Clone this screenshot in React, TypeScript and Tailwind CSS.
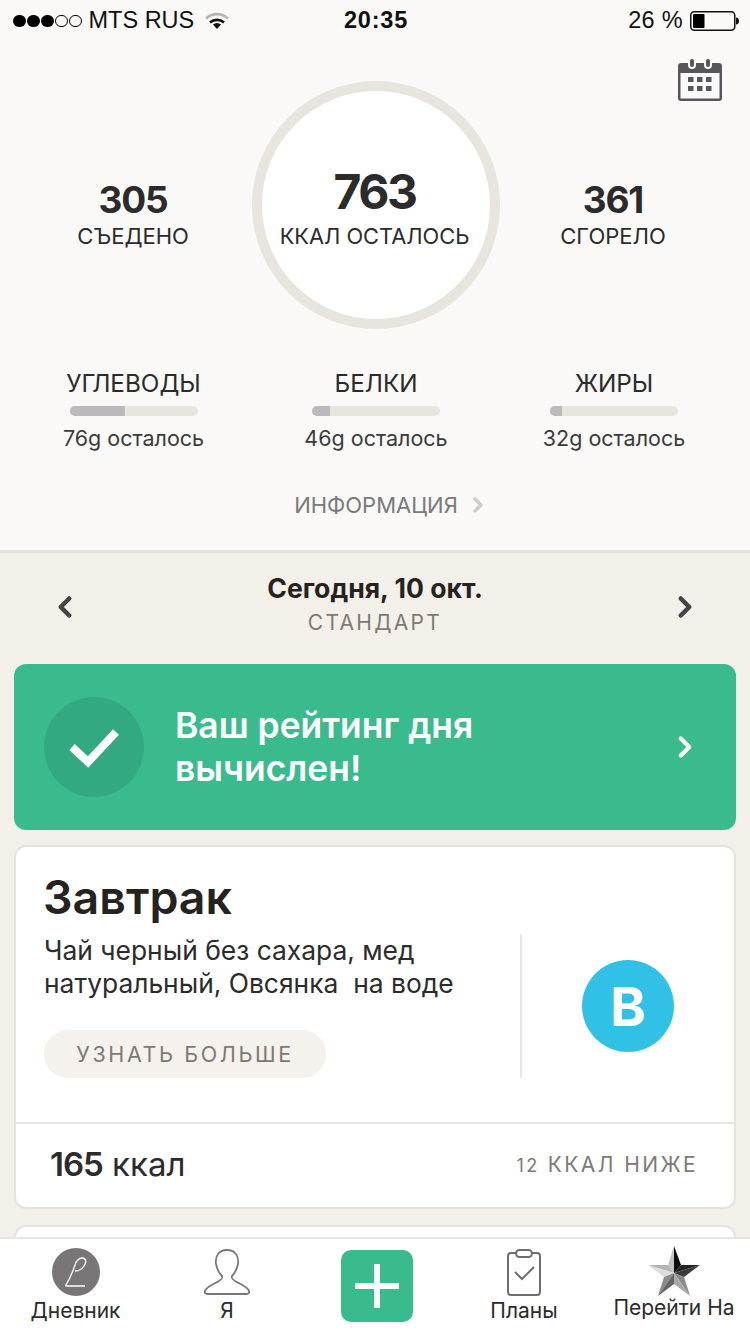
import React from 'react';
import { ChevronLeft, ChevronRight } from 'lucide-react';

const font = { fontFamily: 'Inter, "Liberation Sans", sans-serif' };

const macros = [
  { name: 'УГЛЕВОДЫ', left: '76g осталось', pct: 43, col: 'pl-[15px]' },
  { name: 'БЕЛКИ', left: '46g осталось', pct: 14, col: '' },
  { name: 'ЖИРЫ', left: '32g осталось', pct: 9, col: '' },
];

const CalendarIcon = () => (
  <svg width="44" height="42" viewBox="0 0 44 42">
    <path d="M3 4h7v2a4 4 0 0 0 8 0V4h8v2a4 4 0 0 0 8 0V4h7a3 3 0 0 1 3 3v32a3 3 0 0 1-3 3H3a3 3 0 0 1-3-3V7a3 3 0 0 1 3-3z" fill="#58565a" />
    <rect x="2.5" y="14" width="39" height="25.5" fill="#fafafa" />
    <rect x="12" y="0" width="4" height="8" rx="2" fill="#58565a" />
    <rect x="28" y="0" width="4" height="8" rx="2" fill="#58565a" />
    {[10, 19, 28].map((x) =>
      [18, 27].map((y) => <rect key={`${x}-${y}`} x={x} y={y} width="5.5" height="5" fill="#58565a" />),
    )}
  </svg>
);

const StatusBar = () => (
  <div className="h-[40px] pt-[2px] flex items-center justify-between pl-[13px] pr-[11px] text-[23.5px] text-[#111]" style={{ fontFamily: '"Liberation Sans", sans-serif' }}>
    <div className="flex items-center w-[260px]">
      <div className="flex gap-[1.5px] mr-[7px]">
        {[1, 1, 1, 0, 0].map((on, i) => (
          <span key={i} className={on ? 'w-[12.500px] h-[12.500px] rounded-full bg-black' : 'w-[12.500px] h-[12.500px] rounded-full border border-black'} />
        ))}
      </div>
      <span>MTS RUS</span>
      <svg className="ml-[11px]" width="24" height="18" viewBox="0 0 24 18">
        <path d="M1 6.5a16 16 0 0 1 22 0" fill="none" stroke="#b5b5b5" strokeWidth="2.6" />
        <path d="M5 10.5a10.5 10.5 0 0 1 14 0" fill="none" stroke="#111" strokeWidth="2.6" />
        <path d="M8 12.5a6 6 0 0 1 8 0L12 17z" fill="#111" />
      </svg>
    </div>
    <span className="font-bold tracking-[0.8px]">20:35</span>
    <div className="flex items-center justify-end w-[260px]">
      <span className="mr-[7px] tracking-[0.3px]">26 %</span>
      <svg width="49" height="20" viewBox="0 0 49 20">
        <rect x="0.75" y="0.75" width="44" height="18.5" rx="3.5" fill="none" stroke="#111" strokeWidth="1.5" />
        <rect x="3" y="3" width="11.5" height="14" rx="1" fill="#000" />
        <path d="M46 6.5c2 0 3 1.500 3 3.500s-1 3.500-3 3.500z" fill="#111" />
      </svg>
    </div>
  </div>
);

const TabLabel = ({ children }: { children: React.ReactNode }) => (
  <span className="text-[21px] leading-[24px] mt-[3px] text-[#2a2a2a] whitespace-nowrap">{children}</span>
);

export default function App() {
  return (
    <div className="w-[750px] h-[1334px] overflow-hidden flex flex-col bg-[#f3f0ea]" style={font}>
      <div className="relative shrink-0 h-[553px] bg-[#faf9f8] border-b-[3px] border-[#e4e2de]">
        <StatusBar />
        <div className="absolute right-[28px] top-[59px]">
          <CalendarIcon />
        </div>

        <div className="flex items-center mt-[41px] h-[248px]">
          <div className="w-[252px] pl-[14px] pt-[18px] flex flex-col items-center">
            <span className="text-[37px] leading-[44px] font-bold tracking-[-1.2px] text-[#2b2b2b]">305</span>
            <span className="text-[22px] leading-[28px] text-[#2b2b2b]">СЪЕДЕНО</span>
          </div>
          <div className="w-[248px] h-[248px] rounded-full bg-white border-[10px] border-[#e8e5df] flex flex-col items-center justify-center shrink-0 pt-[10px] pr-[3px]">
            <span className="text-[48px] leading-[52px] font-bold tracking-[-2.5px] text-[#2b2b2b]">763</span>
            <span className="text-[21.800px] leading-[36px] text-[#2b2b2b] whitespace-nowrap">ККАЛ ОСТАЛОСЬ</span>
          </div>
          <div className="w-[226px] pt-[18px] flex flex-col items-center">
            <span className="text-[37px] leading-[44px] font-bold tracking-[-1.2px] text-[#2b2b2b]">361</span>
            <span className="text-[22px] leading-[28px] text-[#2b2b2b]">СГОРЕЛО</span>
          </div>
        </div>

        <div className="grid grid-cols-[252px_248px_228px] mt-[40px]">
          {macros.map((m) => (
            <div key={m.name} className={`flex flex-col items-center ${m.col}`}>
              <span className="text-[24.300px] leading-[28px] text-[#2b2b2b]">{m.name}</span>
              <div className="w-[128px] h-[10px] mt-[9px] rounded-full bg-[#e8e5df] overflow-hidden">
                <div className="h-full bg-[#bbb9bb]" style={{ width: `${m.pct}%` }} />
              </div>
              <span className="text-[21.500px] leading-[24px] mt-[10px] text-[#3a3a3a]">{m.left}</span>
            </div>
          ))}
        </div>

        <div className="flex items-center justify-center mt-[42px] pl-[34px] text-[22px] leading-[26px] text-[#7a7a7a]">
          <span>ИНФОРМАЦИЯ</span>
          <ChevronRight className="ml-[8px] text-[#cfcdca]" size={24} strokeWidth={3.5} />
        </div>
      </div>

      <div className="flex-1 min-h-0 overflow-hidden flex flex-col px-[14px]">
        <div className="shrink-0 h-[111px] flex items-center justify-between px-[34px] pb-[9px]">
          <ChevronLeft className="text-[#444] translate-y-[3px]" size={34} strokeWidth={3.2} />
          <div className="flex flex-col items-center">
            <span className="text-[26.600px] leading-[32px] mb-[6px] font-bold text-[#252220]">Сегодня, 10 окт.</span>
            <span className="text-[21px] leading-[26px] tracking-[2.3px] text-[#7d7a75]">СТАНДАРТ</span>
          </div>
          <ChevronRight className="text-[#444] translate-y-[3px]" size={34} strokeWidth={3.2} />
        </div>

        <div className="shrink-0 h-[166px] rounded-[12px] bg-[#3abb8d] flex items-center pl-[30px] pr-[34px]">
          <div className="w-[100px] h-[100px] rounded-full bg-[#33a981] flex items-center justify-center">
            <svg width="52" height="42" viewBox="0 0 52 42">
              <path d="M4 21l16 15L48 6" fill="none" stroke="#fff" strokeWidth="8" />
            </svg>
          </div>
          <div className="flex-1 ml-[31px] text-[35.400px] leading-[43px] font-semibold text-white">
            Ваш рейтинг дня
            <br />
            вычислен!
          </div>
          <ChevronRight className="text-white" size={34} strokeWidth={3} />
        </div>

        <div className="shrink-0 mt-[15px] h-[364px] rounded-[12px] bg-white border-2 border-[#e6e3dd] flex flex-col">
          <div className="flex-1 flex pl-[28px]">
            <div className="w-[476px] shrink-0">
              <div className="text-[46.500px] leading-[54px] font-semibold text-[#252220] mt-[23px] -ml-[1px]">Завтрак</div>
              <div className="text-[26.400px] leading-[33px] text-[#2b2b2b] mt-[10px] whitespace-nowrap">
                Чай черный без сахара, мед
                <br />
                натуральный, Овсянка&nbsp; на воде
              </div>
              <div className="mt-[30px] w-[282px] h-[48px] rounded-full bg-[#f5f1ec] flex items-center justify-center text-[21.500px] tracking-[2.600px] text-[#7d7a75]">
                УЗНАТЬ БОЛЬШЕ
              </div>
            </div>
            <div className="flex-1 border-l-2 border-[#e9e7e3] h-[144px] mt-[87px] flex items-center justify-center">
              <div className="w-[92px] h-[92px] rounded-full bg-[#31c1e6] flex items-center justify-center text-[54px] font-bold text-white">
                B
              </div>
            </div>
          </div>
          <div className="h-[85px] shrink-0 border-t-2 border-[#e9e7e3] flex items-center justify-between pl-[34px] pr-[36px] pb-[2px]">
            <span className="text-[33px] text-[#2b2b2b]">
              <span className="font-semibold tracking-[-1px]">165</span> ккал
            </span>
            <span className="text-[21px] tracking-[2.400px] text-[#7d7a75]">
              <span className="text-[18px]">12</span> ККАЛ НИЖЕ
            </span>
          </div>
        </div>

        <div className="shrink-0 mt-[16px] h-[60px] rounded-[12px] bg-white border-2 border-[#e6e3dd]" />
      </div>

      <div className="shrink-0 h-[97px] bg-white border-t-2 border-[#e8e6e2] grid grid-cols-[151px_152px_147px_148px_152px] relative">
        <div className="flex flex-col items-center pt-[9px]">
          <div className="w-[48px] h-[48px] rounded-full bg-[#787676] flex items-center justify-center">
            <svg width="26" height="32" viewBox="0 0 26 32">
              <path d="M3 29c5-8 7-14 9-20 1-4 4-7 7-7 4 0 5 4 2 8-2 3-6 5-9 5M3 29c-1 1 0 1 2 1h17" fill="none" stroke="#fff" strokeWidth="1.3" />
            </svg>
          </div>
          <TabLabel>Дневник</TabLabel>
        </div>
        <div className="flex flex-col items-center pt-[9px]">
          <svg width="48" height="48" viewBox="0 0 48 48">
            <path d="M24 2c9 0 12 7 11 14-1 5-3 9-6 12-1 2 0 3 3 5 5 3 13 6 14 10 1 2-1 3-3 3H5c-2 0-4-1-3-3 1-4 9-7 14-10 3-2 4-3 3-5-3-3-5-7-6-12C12 9 15 2 24 2z" fill="none" stroke="#777" strokeWidth="1.8" />
          </svg>
          <TabLabel>Я</TabLabel>
        </div>
        <div className="flex justify-center pt-[11px]">
          <div className="w-[72px] h-[72px] rounded-[10px] bg-[#3abb8d] flex items-center justify-center">
            <svg width="44" height="44" viewBox="0 0 44 44">
              <path d="M22 0v44M0 22h44" stroke="#fff" strokeWidth="6" />
            </svg>
          </div>
        </div>
        <div className="flex flex-col items-center pt-[9px]">
          <svg width="36" height="48" viewBox="0 0 36 48">
            <path d="M11 5H5a3 3 0 0 0-3 3v36a3 3 0 0 0 3 3h26a3 3 0 0 0 3-3V8a3 3 0 0 0-3-3h-6" fill="none" stroke="#6f6f6f" strokeWidth="2" />
            <rect x="10" y="2" width="16" height="7" rx="3.5" fill="#fff" stroke="#6f6f6f" strokeWidth="2" />
            <path d="M9 24l7 7 12-12" fill="none" stroke="#6f6f6f" strokeWidth="2" />
          </svg>
          <TabLabel>Планы</TabLabel>
        </div>
        <div className="flex flex-col items-center pt-[7px]">
          <svg width="52" height="50" viewBox="0 0 52 50">
            <path d="M26 0l-6 19 6 8z" fill="#c4c4c4" />
            <path d="M26 0l7 19-7 8z" fill="#0c0c0c" />
            <path d="M0 19h20l6 8z" fill="#b5b5b5" />
            <path d="M52 19H33l-7 8z" fill="#222" />
            <path d="M0 19l16 12 10-4z" fill="#dcdcdc" />
            <path d="M52 19L36 31l-10-4z" fill="#3a3a3a" />
            <path d="M10 50l6-19 10-4z" fill="#8c8c8c" />
            <path d="M42 50l-6-19-10-4z" fill="#8a8a8a" />
            <path d="M10 50l16-12V27z" fill="#666" />
            <path d="M42 50L26 38V27z" fill="#a8a8a8" />
          </svg>
          <span className="text-[21px] leading-[24px] text-[#2a2a2a] whitespace-nowrap">Перейти На</span>
        </div>
      </div>
    </div>
  );
}
